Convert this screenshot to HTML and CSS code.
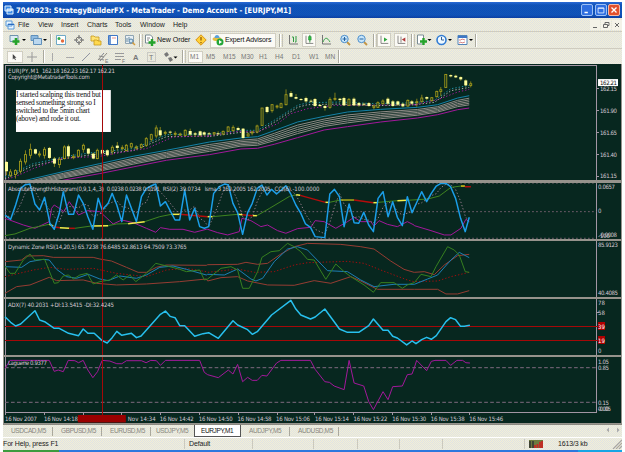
FILE: index.html
```html
<!DOCTYPE html>
<html lang="en">
<head>
<meta charset="utf-8">
<title>MetaTrader</title>
<link rel="stylesheet" href="styles.css">
</head>
<body>
<div class="window">
  <header class="titlebar">
    <svg class="app-icon" viewBox="0 0 10 10"><path d="M1 1h6v5H1zM3 4h6v5H3z" fill="#3d8be8" stroke="#e4f4ff"/><path d="M3 5h6" stroke="#fff"/></svg>
    <svg class="title-text" viewBox="0 0 280 14"><text x="0" y="10.3" textLength="275" lengthAdjust="spacingAndGlyphs">7040923: StrategyBuilderFX - MetaTrader - Demo Account - [EURJPY,M1]</text></svg>
    <div class="win-buttons">
      <svg viewBox="0 0 12 12"><path d="M3 9h4" stroke="#fff" stroke-width="1.6"/></svg>
      <svg viewBox="0 0 12 12"><path d="M2.5 3.5h7v6h-7zM2.5 4h7" fill="none" stroke="#e8f2ff"/></svg>
      <svg class="close" viewBox="0 0 12 12"><path d="M3 3l6 6M9 3l-6 6" stroke="#fff" stroke-width="1.6"/></svg>
    </div>
  </header>

  <nav class="menubar chrome">
    <svg class="app-icon" viewBox="0 0 10 10"><path d="M1 1h6v5H1zM3 4h6v5H3z" fill="#eaf5ff" stroke="#5b9ad8"/><path d="M3 4.5h6" stroke="#2b6bc0"/></svg>
    <span>File</span><span>View</span><span>Insert</span><span>Charts</span><span>Tools</span><span>Window</span><span>Help</span>
    <svg class="mdi" viewBox="0 0 32 10"><rect width="10" height="10" fill="#f4f2e8"/><rect x="11" width="10" height="10" fill="#f4f2e8"/><rect x="22" width="10" height="10" fill="#f4f2e8"/><path d="M3 7.5h4M13.500 4.500h4v3h-4zM15 4V2.500h4v3h-1M25 3l4 4M29 3l-4 4" fill="none" stroke="#666"/></svg>
  </nav>

  <div class="toolbar chrome main-tools">
    <svg viewBox="0 0 20 12"><path d="M1 1.500h8v6H1z" fill="#dcecf5" stroke="#6f93ad"/><path d="M7 4v7M3.500 7.500h7" stroke="#25a32b" stroke-width="2.600"/><path d="M13 5h4l-2 2z"/></svg>
    <svg viewBox="0 0 20 12"><path d="M1 1.500h7v5H1z" fill="#8fbbe2" stroke="#6090bb"/><path d="M3.500 4.500h8v6h-8z" fill="#bcd8ef" stroke="#6090bb"/><path d="M13 5h4l-2 2z"/></svg>
    <i class="sep"></i>
    <svg viewBox="0 0 12 12"><path d="M1.500 1.500h9v9h-9z" fill="#fff" stroke="#6fa9c7"/><circle cx="4" cy="4.500" r="1.500" fill="#32a84b"/><circle cx="7.500" cy="7" r="1.700" fill="#e46b3d"/></svg>
    <svg viewBox="0 0 12 12"><circle cx="6" cy="6" r="3" fill="none" stroke="#777"/><path d="M6 1v4M6 7v4M1 6h4M7 6h4" stroke="#666"/></svg>
    <svg viewBox="0 0 12 12"><path d="M1 2h3l1 1h4v4H1z" fill="#ffe372" stroke="#c79b1c" stroke-width=".8"/><path d="M4 6h3l1 1h3v4H4z" fill="#ffd94e" stroke="#c79b1c" stroke-width=".8"/></svg>
    <svg viewBox="0 0 12 12"><path d="M1.500 1.500h9v9h-9z" fill="#fff" stroke="#3f77c6"/><path d="M3 1v10" stroke="#3f77c6" stroke-width="1.500"/><path d="M5 4h4" stroke="#e49393"/></svg>
    <svg viewBox="0 0 12 12"><path d="M1.500 1.500h8v8h-8z" fill="#e7eff4" stroke="#90a5b2"/><path d="M3 8V4M5 6V3" stroke="#6b8ca1"/><circle cx="7" cy="7" r="2" fill="#cde5f5" stroke="#5680a3"/><path d="M8.500 8.500l2.500 2.500" stroke="#d29b3c" stroke-width="1.500"/></svg>
    <i class="sep grip"></i>
    <div class="labelled"><svg viewBox="0 0 12 12"><path d="M1.500 1h5l2 2v6h-7z" fill="#fff" stroke="#7b8c93"/><path d="M3 4h3M3 6h2" stroke="#888"/><path d="M8 5v7M4.500 8.500h7" stroke="#25a32b" stroke-width="2.400"/></svg><span>New Order</span></div>
    <svg viewBox="0 0 12 12"><path d="M6 .8L11.200 6 6 11.200.8 6z" fill="#ffd13b" stroke="#d99416"/><path d="M6 3v3.500M6 8v1.200" stroke="#8a5200" stroke-width="1.200"/></svg>
    <div class="labelled pressed experts"><svg viewBox="0 0 12 12"><ellipse cx="5" cy="5" rx="4.500" ry="2" fill="#e6bd43"/><path d="M2.500 4c0-4 5-4 5 0z" fill="#5ba1d9"/><circle cx="8" cy="8" r="3.500" fill="#22a537"/><path d="M7 6l3 2-3 2z" fill="#fff"/></svg><span>Expert Advisors</span></div>
    <i class="sep grip"></i>
    <svg viewBox="0 0 12 12"><path d="M2.500 1v9H11" fill="none" stroke="#777"/><path d="M5 3h1.500v5M9 2v6h-1" fill="none" stroke="#2c9a40"/></svg>
    <svg class="pressed" viewBox="0 0 14 14"><path d="M3.500 2v9H12" fill="none" stroke="#777"/><path d="M8 1v9" stroke="#187e27"/><path d="M6.500 3h3v4h-3z" fill="#2fc145" stroke="#187e27" stroke-width=".6"/></svg>
    <svg viewBox="0 0 12 12"><path d="M2.500 1v9H11" fill="none" stroke="#777"/><path d="M3 8C5 3 7 3 10 8" fill="none" stroke="#39a549"/></svg>
    <svg viewBox="0 0 12 12"><path d="M8 8l3 3" stroke="#c39443" stroke-width="1.800"/><circle cx="5.500" cy="5" r="3.700" fill="#c8e6fb" stroke="#4d8ec9"/><path d="M3.500 5h4M5.500 3v4" stroke="#24629e"/></svg>
    <svg viewBox="0 0 12 12"><path d="M8 8l3 3" stroke="#c39443" stroke-width="1.800"/><circle cx="5.500" cy="5" r="3.700" fill="#c8e6fb" stroke="#4d8ec9"/><path d="M3.500 5h4" stroke="#24629e"/></svg>
    <i class="sep grip"></i>
    <svg class="pressed" viewBox="0 0 14 14"><path d="M3.500 2v9H12" fill="none" stroke="#777"/><path d="M7 4l4 2.500L7 9z" fill="#2da63c"/></svg>
    <svg class="pressed" viewBox="0 0 14 14"><path d="M3.500 2v9H12M7 3v7" fill="none" stroke="#777"/><path d="M12 4v5L8 6.500z" fill="#b03838"/></svg>
    <i class="sep grip"></i>
    <svg viewBox="0 0 20 12"><path d="M1.500 1h6v9h-6z" fill="#fff" stroke="#7b8c93"/><path d="M7.500 4v7M4 7.500h7" stroke="#25a32b" stroke-width="2.400"/><path d="M11.500 5h4l-2 2z"/></svg>
    <svg viewBox="0 0 20 12"><circle cx="5.500" cy="6" r="4.500" fill="#eef8ff" stroke="#317cd3" stroke-width="1.600"/><path d="M5.500 3v3H8" fill="none" stroke="#2f5f96"/><path d="M12 5h4l-2 2z"/></svg>
    <svg viewBox="0 0 18 12"><path d="M1 1.500h9v9H1z" fill="#fff" stroke="#5284b9"/><path d="M1 3h9" stroke="#3f77c6" stroke-width="2"/><path d="M2 6l2 0 1-1 3 1M2 9l2-1 1 1 3-1" stroke="#c66" fill="none" stroke-width=".8"/><path d="M12 5h4l-2 2z"/></svg>
    <i class="sep"></i>
  </div>

  <div class="toolbar chrome line-tools">
    <svg class="pressed" viewBox="0 0 16 14"><path d="M6 2v9l2-2 2 3 1-1-2-3h3z" fill="#444"/></svg>
    <svg viewBox="0 0 12 12"><path d="M6 1v10M1 6h10" stroke="#999"/></svg>
    <i class="sep"></i>
    <svg viewBox="0 0 12 12"><path d="M5.500 2v8" stroke="#aaa"/></svg>
    <svg viewBox="0 0 12 12"><path d="M2 6.500h8" stroke="#aaa"/></svg>
    <svg viewBox="0 0 12 12"><path d="M2 10l8-8" stroke="#999"/></svg>
    <svg viewBox="0 0 12 12"><path d="M1 9l6-7M3 10l7-8M2 5l5 1M2 8l5 1" stroke="#888"/><text x="8" y="11.500" font-size="5">E</text></svg>
    <svg viewBox="0 0 12 12"><path d="M1 2.500h9M1 5.500h9M1 8.500h6" stroke="#999"/><text x="8" y="12" font-size="5">F</text></svg>
    <svg viewBox="0 0 12 12"><text x="3" y="9" font-size="7.500" font-weight="bold">A</text></svg>
    <svg viewBox="0 0 12 12"><path d="M1.500 1.500h8v9h-8z" fill="none" stroke="#aaa" stroke-dasharray="1"/><text x="3" y="9" font-size="7">T</text></svg>
    <svg viewBox="0 0 16 12"><path d="M1 3l3-2 2 3-3 2zM5 7l3-1 2 3-3 2zM3 5l5 3" fill="#777"/><path d="M10.500 5.500h4l-2 2z"/></svg>
    <i class="sep grip"></i>
    <span class="pressed">M1</span><span>M5</span><span>M15</span><span>M30</span><span>H1</span><span>H4</span><span>D1</span><span>W1</span><span>MN</span>
    <i class="sep"></i>
  </div>

  <main class="charts">
    <svg class="pane price" viewBox="3 64 619 116">
      <path class="axis" d="M5.500 180V65.500H597.500V180"/>
      <g id="price" transform="translate(0 62) scale(.33333)"></g>
      <rect x="16" y="90" width="95" height="42" fill="#fff"/>
      <g class="note">
        <text x="16" y="97" textLength="85">I started scalping this trend but</text>
        <text x="16" y="105" textLength="80">sensed something strong so I</text>
        <text x="16" y="113" textLength="74">switched to the 5min chart</text>
        <text x="16" y="121" textLength="65">(above) and rode it out.</text>
      </g>
      <path class="cross" d="M102.500 65V180"/>
      <text x="8" y="73" textLength="31">EURJPY,M1</text><text x="42" y="73" textLength="73">162.18 162.23 162.17 162.21</text>
      <text x="8" y="79.300" textLength="82">Copyright@MetatraderTools.com</text>
      <path class="axis" d="M597 88.500h3M597 110.500h3M597 132.500h3M597 154.500h3M597 176.500h3"/>
      <text x="601" y="91.300" textLength="17">162.15</text><text x="601" y="112.800" textLength="17">161.90</text><text x="601" y="134.800" textLength="17">161.65</text><text x="601" y="156.600" textLength="17">161.40</text><text x="601" y="178.300" textLength="17">161.15</text>
      <rect x="599" y="79" width="20" height="7" fill="#fff"/><text class="dark" x="601" y="85.200" textLength="17">162.21</text>
    </svg>

    <svg class="pane" viewBox="3 183 619 56">
      <path class="axis" d="M5.500 183V239M597.500 183V239"/>
      <g id="strength" transform="translate(0 180) scale(.33333)">
        <path class="level" d="M15 9H1792M15 95H1792M15 175H1792"/>
      </g>
      <path class="cross" d="M102.500 183V239"/>
      <text x="8" y="190.700" textLength="96">AbsoluteStrengthHistogram(0,9,1,4,,3)</text><text x="107" y="190.700" textLength="53">0.0238 0.0238 0.0191</text><text x="163" y="190.700" textLength="38">RSI(2) 39.0734</text><text x="205" y="190.700" textLength="66">lsma 3 162.2005 162.2005</text><text x="275" y="190.700" textLength="45">CCI(6) -100.0000</text>
      <text x="599" y="188.700" textLength="17">0.0657</text><text x="599" y="213.500">0</text><text x="600" y="237.500" textLength="18">-0.0008</text><text x="599" y="238.500" textLength="12">-100</text>
    </svg>

    <svg class="pane" viewBox="3 241 619 56">
      <path class="axis" d="M5.500 241V297M597.500 241V297"/>
      <g id="zones" transform="translate(0 180) scale(.33333)"></g>
      <path class="cross" d="M102.500 241V297"/>
      <text x="8" y="248.700" textLength="179">Dynamic Zone RSI(14,20,5) 65.7238 76.6485 52.8613 64.7509 73.3765</text>
      <text x="599" y="247" textLength="20">85.9123</text><text x="599" y="295.500" textLength="20">40.4085</text>
    </svg>

    <svg class="pane" viewBox="3 299 619 56">
      <path class="axis" d="M5.500 299V355M597.500 299V355M597 312.500h3"/>
      <path class="cross" d="M5 326.500H600M5 340.500H600"/>
      <g id="adx" transform="translate(0 295) scale(.33333)"></g>
      <path class="cross" d="M102.500 299V355"/>
      <text x="8" y="307.200" textLength="106">ADX(7) 40.2031 +DI:13.5415 -DI:32.4245</text>
      <rect x="599" y="322" width="7" height="8" fill="#b00000"/><rect x="599" y="336" width="7" height="8" fill="#b00000"/>
      <text x="599" y="305">78</text><text x="599" y="315">58</text><text class="lit" x="599" y="328.700">39</text><text class="lit" x="599" y="342.800">19</text><text x="599" y="353.500">0</text>
    </svg>

    <svg class="pane last" viewBox="3 357 619 66">
      <path class="axis" d="M5.500 357V413M597.500 357V413M5 412.500H598"/>
      <path class="axis" d="M5.500 413v2M44.500 413v2M83.500 413v2M121.500 413v2M160.500 413v2M199.500 413v2M238.500 413v2M277.500 413v2M315.500 413v2M354.500 413v2M393.500 413v2M432.500 413v2M470.500 413v2"/>
      <g id="laguerre" transform="translate(0 295) scale(.33333)">
        <path class="level wide" d="M15 218H1792M15 322H1792"/>
      </g>
      <path class="cross" d="M102.500 357V415"/>
      <text x="8" y="365.300" textLength="39">Laguerre 0.9377</text>
      <text x="599" y="363.500" textLength="11">1.05</text><text x="599" y="369.500" textLength="11">0.85</text><text x="599" y="404.800" textLength="11">0.15</text><text x="599" y="411" textLength="13">-0.05</text><text x="599" y="411.500" textLength="11">0.00</text>
      <g id="times"></g>
      <rect x="78" y="415" width="48" height="7.500" fill="#990000"/>
    </svg>
  </main>

  <div class="tabs chrome">
    <span>USDCAD,M5</span><span>GBPUSD,M5</span><span>EURUSD,M5</span><span class="no-sep">USDJPY,M5</span><span class="active">EURJPY,M1</span><span>AUDJPY,M5</span><span>AUDUSD,M5</span>
    <svg class="scroll" viewBox="0 0 16 8"><path d="M4 1.500v5L1.500 4zM12 1.500v5L14.500 4z" fill="#aaa"/></svg>
  </div>

  <footer class="status chrome">
    <span>For Help, press F1</span><span>Default</span><span></span><span></span><span></span><span></span><span></span>
    <span class="traffic"><svg viewBox="0 0 14 8"><path d="M0 8V0h14v8z" fill="#6d7a3d"/><path d="M1 8V1M4 8V1" stroke="#333" stroke-width="1.500"/><path d="M6 8V5M8.500 8V4M11 8V2M13 8V1" stroke="#cd2323" stroke-width="1.700"/></svg>1613/3 kb</span>
    <svg class="resize" viewBox="0 0 10 10"><path d="M1 10l9-9M4 10l6-6M7 10l3-3" stroke="#aaa6a0" stroke-width="1.200"/></svg>
  </footer>
  <div class="taskbar"></div>
</div>
<script src="script.js"></script>
</body>
</html>
```
FILE: styles.css
```css
* { box-sizing: border-box; }
body { margin: 0; background: #fff; overflow: hidden; }
svg { display: block; flex: none; }
.window {
  width: 619px; height: 450px; margin: 2px 0 0 3px;
  display: flex; flex-direction: column;
  font: 7px/10px "Liberation Sans", sans-serif; color: #222;
}
.chrome { background: repeating-conic-gradient(#dfe3e4 0 25%, #f3efd6 0 50%) 0 0 / 2px 2px; }

.titlebar {
  height: 16px; flex: none; display: flex; align-items: center; padding: 0 0 0 1px;
  background: linear-gradient(#2a6ad6 0, rgba(16, 78, 188, .75) 3px, rgba(16, 78, 188, .75) 13px, #0c3fa3 16px),
    repeating-conic-gradient(#0b43b8 0 25%, #137a9c 0 50%) 0 0 / 2px 2px;
}
.app-icon { width: 10px; height: 10px; }
.title-text { width: 280px; height: 14px; margin-left: 2px; }
.title-text text { font: bold 7.6px "DejaVu Sans Condensed", "DejaVu Sans", sans-serif; fill: #fff; }
.win-buttons { margin-left: auto; display: flex; gap: 1.500px; padding-right: 2px; }
.win-buttons svg { width: 12px; height: 12px; background: #2e6ee0; border: 1px solid #9dc0f5; border-radius: 2px; }
.win-buttons .close { background: #e2502c; border-color: #f5b9a5; }

.menubar {
  height: 13px; flex: none; display: grid; align-items: center; padding-left: 2px;
  grid-template-columns: 13px 20px 23px 26px 28px 25px 33px 1fr 32px;
}
.menubar .mdi { width: 32px; height: 10px; }

.toolbar { flex: none; display: grid; align-items: center; justify-items: start; padding-left: 6px; border-top: 1px solid #cfccc0; }
.toolbar svg { width: 12px; height: 12px; }
.toolbar svg[viewBox^="0 0 20"] { width: 20px; }
.toolbar svg[viewBox^="0 0 18"] { width: 18px; }
.toolbar svg[viewBox^="0 0 16"] { width: 16px; }
.toolbar svg[viewBox^="0 0 14"] { width: 14px; height: 14px; }
.toolbar text { font-family: "Liberation Sans", sans-serif; fill: #777; }
.main-tools {
  height: 17px;
  grid-template-columns: 21px 20px 5px 18px 17px 17px 17px 15px 5px 51px 15px 69px 8px 15px 18px 19px 17px 17px 4px 17px 17px 5px 20px 21px 18px 3px;
}
.line-tools {
  height: 16px; padding-left: 4px;
  grid-template-columns: 19px 17px 4px 17px 16px 17px 17px 16px 16px 17px 19px 6px 16px 17px 18px 18px 16px 17px 17px 16px 15px 3px;
}
.line-tools span { color: #777; font-size: 6.500px; padding: 1px 2px; }
.sep { width: 1px; height: 13px; background: #aaa99d; box-shadow: 1px 0 #fff; }
.grip { border-left: 0; box-shadow: 1px 0 #fff, 3px 0 #c4c2b6; }
.labelled { display: flex; align-items: center; gap: 1px; white-space: nowrap; color: #111; letter-spacing: -.05px; }
.pressed { background: #fbfaf5; border: 1px solid #d0cec2; }
.line-tools .pressed { padding: 0 3px 0 1px; }
.labelled.pressed { width: 66px; height: 15px; padding-left: 1px; letter-spacing: -.15px; }

.charts { flex: none; height: 360px; display: flex; flex-direction: column; background: #96938c; }
.pane { width: 619px; background: #07271f; border-right: 1px solid #96938c; box-shadow: inset 1px 0 #99958c; margin-top: 2px; height: 56px; }
.price { height: 116px; margin: 0 0 1px; }
.charts .last { height: 66px; }
.pane text { font: 6px "DejaVu Sans Condensed", "DejaVu Sans", sans-serif; fill: #d3c9d3; }
.note text { font: 7.500px "Liberation Serif", serif; fill: #111; }
.pane .dark { fill: #111; }
.pane .lit { fill: #fff; }
.axis { fill: none; stroke: #a296a4; shape-rendering: crispEdges; }
.cross { fill: none; stroke: #a50808; shape-rendering: crispEdges; }
.level { fill: none; stroke: #76606f; stroke-width: 3; stroke-dasharray: 5 7; }
.wide { stroke: #806a80; stroke-dasharray: 11 7; }
.line { fill: none; stroke-width: 3; stroke-linejoin: round; }
.thick { stroke-width: 4.500; }
.dots { stroke-dasharray: 4 6; }

.tabs { flex: none; height: 13px; display: flex; align-items: flex-start; border-top: 1px solid #8c8a82; }
.tabs span { height: 9px; margin-top: 2px; width: 49px; padding-left: 8px; line-height: 7px; font-size: 6.500px; letter-spacing: -.38px; color: #88867d; border-right: 1px solid #aaa89d; }
.tabs span:first-child { width: 50px; }
.tabs .no-sep { width: 43px; padding-left: 5px; border: 0; }
.tabs .active { width: 47px; height: 12px; margin: 0; padding: 2px 0 0 6px; background: #fff; color: #111; border: 1px solid #555; border-top: 0; }
.tabs .scroll { width: 16px; height: 8px; margin: 1px 1px 0 auto; }

.status {
  flex: none; height: 13px; display: grid; align-items: center; border-top: 1px solid #fff;
  grid-template-columns: 182px 68px 61px 44px 42px 43px 82px 86px 1fr; white-space: nowrap;
}
.status > span { height: 10px; line-height: 10px; border-right: 1px solid #cbc9bd; letter-spacing: -.15px; }
.status > span + span { padding-left: 4px; }
.status .traffic { display: flex; align-items: center; gap: 15px; border: 0; }
.traffic svg { width: 14px; height: 8px; }
.resize { width: 10px; height: 10px; justify-self: end; }
.taskbar { flex: none; height: 2px; background: linear-gradient(90deg, #3c9b3e 56px, #2c78de 56px 575px, #18a5e4 575px); }
```
FILE: script.js
```js
const NS = 'http://www.w3.org/2000/svg';
function add(id, tag, attrs, text) {
  const el = document.createElementNS(NS, tag);
  for (const k in attrs) el.setAttribute(k, attrs[k]);
  if (text) el.textContent = text;
  document.getElementById(id).appendChild(el);
}
// Each series comes in three chunks, one per third of the plot width.
const OFFSETS = [0, 624, 1245];
function join(chunks) {
  return chunks.flatMap((c, i) => c.trim().split(' ').map(p => {
    const [x, y] = p.split(',').map(Number);
    return [x + OFFSETS[i], y];
  }));
}
function line(id, pts, stroke, cls = '') {
  add(id, 'polyline', { points: pts.map(p => p.join()).join(' '), stroke, class: 'line ' + cls });
}

// Moving-average ribbon: x, upper edge, lower edge
const ribbon = [[70,357,382],[190,329,355],[300,305,335],[400,283,315],[500,265,295],[630,240,278],[724,228,261],[774,224,259],[824,206,247],[894,180,227],[974,163,204],[1044,150,194],[1144,142,180],[1254,136,168],[1315,128,158],[1375,108,143],[1410,101,138]];
const band = f => ribbon.map(([x, a, b]) => [x, a + (b - a) * f]);
line('price', band(0), '#1582a8');
[.2, .34, .48, .61, .74].forEach(f => line('price', band(f), '#8e8b86', ''));
line('price', band(1), '#a3189b');
const fast = join(['15,345 100,305 150,295 200,283 270,273 400,260 450,240 500,218 630,216', '0,218 100,205 150,205 200,175 270,130 300,122 400,120 500,125 630,122', '0,122 60,115 110,80 165,70']);
const slow = join(['15,355 60,338 100,320 180,290 300,283 400,265 440,260 520,225 630,222', '0,222 90,208 150,210 210,185 250,155 300,140 380,130 630,128', '0,128 70,113 130,90 165,82']);
line('price', fast, '#2296ad', 'dots');
line('price', fast.map((p, i) => [p[0], (p[1] * 1 + slow[Math.min(i, slow.length - 1)][1] * 0) + 6]), '#b9b5b5', 'dots');
line('price', slow, '#a3189b', 'dots');

// Candles: x, body top, body bottom, high, low, filled
const candles = [
  [[18,300,328,298,340,1],[32,330,340,322,346,0],[47,326,338,322,350,0],[61,298,328,290,335,0],[76,278,300,265,308,0],[90,262,280,245,290,0],[105,262,275,260,278,1],[119,276,279,268,286,0],[134,262,280,255,290,0],[148,258,288,255,292,1],[163,290,305,285,315,1],[178,292,308,285,318,0],[192,255,290,250,292,0],[206,253,283,248,290,1],[221,284,287,276,292,0],[236,265,283,262,286,0],[250,250,262,245,272,0],[264,260,275,258,278,1],[279,275,290,272,292,1],[293,265,290,260,292,0],[307,264,274,260,278,1],[322,265,280,262,284,1],[337,256,268,250,278,0],[351,251,258,240,266,1],[366,257,260,250,266,0],[380,250,266,246,268,0],[395,245,255,242,260,0],[410,255,258,250,264,0],[424,248,256,244,260,0],[439,230,250,225,255,0],[453,218,232,215,240,0],[468,198,222,190,228,0],[482,205,220,195,226,1],[497,211,214,206,220,0],[511,209,212,206,220,1],[526,214,217,208,224,0],[540,216,219,212,222,0],[555,205,220,202,222,0],[570,207,218,200,222,1],[585,214,218,210,224,1],[600,208,220,206,224,1],[614,211,218,208,222,1]],
  [[5,214,217,210,220,1],[18,212,216,210,220,0],[32,214,217,208,220,1],[47,208,216,206,220,0],[62,195,208,192,210,0],[76,196,206,190,210,0],[90,198,204,194,206,1],[105,200,228,198,230,1],[120,216,222,212,224,0],[134,210,213,206,220,0],[149,192,210,188,214,0],[163,138,190,138,192,0],[178,135,150,132,154,1],[192,128,146,126,152,0],[207,132,135,128,140,0],[221,125,137,122,138,0],[235,98,128,82,130,0],[250,93,104,87,106,1],[265,105,110,96,112,1],[280,111,114,108,116,1],[294,108,118,104,122,1],[309,116,119,112,122,1],[323,111,132,108,134,1],[338,129,132,126,134,1],[352,132,138,128,146,1],[367,112,136,106,140,0],[381,109,112,92,116,0],[396,110,114,108,120,1],[410,108,130,104,132,1],[425,112,130,108,132,0],[440,110,130,106,132,1],[454,123,130,120,134,1],[469,125,128,122,132,1],[484,123,132,120,134,1],[498,132,136,128,142,0],[512,122,136,118,138,0],[527,117,125,112,128,0],[542,110,125,106,128,1],[556,118,132,114,134,1],[570,118,128,116,132,1],[585,125,133,122,136,1],[600,115,132,112,134,0],[614,118,125,114,128,1]],
  [[7,119,122,110,134,0],[22,108,118,98,122,0],[37,105,110,103,114,1],[51,107,116,105,118,0],[66,88,104,86,106,0],[80,83,88,75,102,0],[95,37,76,36,78,0],[109,39,43,37,46,1],[124,41,46,38,48,1],[139,45,52,43,56,1],[153,55,70,52,72,1],[168,65,70,58,76,0]]
];
candles.forEach((chunk, i) => chunk.forEach(([x, t, b, h, l, filled]) => {
  const cx = Math.floor((x + OFFSETS[i]) / 3) * 3 + 1.5;
  add('price', 'path', { d: `M${cx} ${h}V${l}`, stroke: '#9a9018', 'stroke-width': 2.5 });
  add('price', 'rect', filled
    ? { x: cx - 4.5, y: t, width: 9, height: b - t, fill: '#ffff9c' }
    : { x: cx - 3, y: t, width: 6, height: b - t, fill: '#07271f', stroke: '#a79d1b', 'stroke-width': 2.6 });
}));

// Strength histogram pane
line('strength', join(['15,115 70,135 105,145 148,125 155,85 163,75 178,85 192,95 208,65 236,105 264,92 300,95 340,132 366,120 400,128 440,145 468,157 482,143 510,148 550,148 585,157 620,148', '0,148 30,158 60,165 95,155 103,115 130,122 160,140 180,135 210,152 235,160 270,146 310,142 323,122 350,125 385,145 420,125 440,112 460,125 490,125 500,138 515,122 540,133 570,140 600,125 620,135', '0,137 50,152 90,165 110,165 140,145 155,118 165,125']), '#a3189b');
const osc = join(['15,105 32,118 47,75 62,25 76,14 90,12 105,72 119,90 134,52 150,130 163,148 178,100 190,35 206,103 221,103 236,45 250,70 264,110 279,148 295,55 307,90 325,70 337,40 351,75 366,125 380,45 410,125 425,50 440,25 453,18 468,12 482,78 497,65 526,120 540,120 555,30 570,120 585,85 600,140 614,145', '3,140 18,40 35,20 50,12 62,14 76,70 90,98 105,163 120,98 134,70 149,25 163,15 178,45 192,28 207,42 221,30 235,17 250,42 265,75 280,100 294,132 309,142 323,170 352,173 367,42 381,28 396,50 410,140 425,72 440,128 454,130 469,97 484,135 498,155 512,55 527,35 542,110 556,65 570,112 585,137 600,50 614,98', '5,72 22,35 37,65 51,40 66,18 80,10 95,10 109,20 124,55 139,115 153,155 165,112']);
const smooth = osc.map((p, i) => {
  const w = osc.slice(Math.max(0, i - 2), i + 1);
  return [p[0], w.reduce((s, q) => s + q[1], 0) / w.length];
});
line('strength', smooth, '#8f7889', 'dots');
const trend = [
  ['#3f8420', '15,167 45,162 90,145 148,133'], ['#f4ee4a', '148,133 160,138'], ['#b50c0c', '160,140 180,143'], ['#f4ee4a', '180,143 208,145'], ['#b50c0c', '208,145 225,145'], ['#3f8420', '225,145 275,138'], ['#f4ee4a', '275,138 325,137'], ['#3f8420', '325,137 350,132 385,131'], ['#f4ee4a', '385,131 435,125'], ['#3f8420', '435,125 480,110 515,103'], ['#f4ee4a', '515,103 540,103'], ['#b50c0c', '540,103 624,110'],
  ['#f4ee4a', '624,110 639,110'], ['#3f8420', '639,110 714,103'], ['#f4ee4a', '714,103 729,104'], ['#b50c0c', '729,104 760,107'], ['#f4ee4a', '760,107 772,107'], ['#3f8420', '772,107 810,85 870,49 890,44'], ['#f4ee4a', '890,44 902,46'], ['#b50c0c', '902,46 978,67'], ['#f4ee4a', '978,67 990,67'], ['#3f8420', '990,67 1022,60'], ['#aaa516', '1022,60 1064,60'], ['#b50c0c', '1064,60 1122,68'], ['#f4ee4a', '1122,68 1136,68'], ['#3f8420', '1136,67 1194,62'], ['#f4ee4a', '1194,62 1222,61'], ['#3f8420', '1222,61 1285,57 1320,48 1355,22 1385,18'], ['#e0c818', '1385,18 1397,18'], ['#b50c0c', '1397,20 1415,20']
];
trend.forEach(([c, p]) => add('strength', 'polyline', { points: p, stroke: c, class: 'line' + (c === '#3f8420' ? '' : ' thick') }));
line('strength', osc, '#1b9ee8', 'thick');

// Dynamic zone pane
line('zones', join(['15,245 65,240 80,228 130,227 160,232 280,232 300,237 335,243 380,262 415,277 440,277 470,262 500,255 620,256', '0,254 90,253 115,247 150,253 180,250 220,222 260,200 300,190 400,193 460,200 500,207 550,243 590,268 620,277', '0,277 30,275 60,284 90,255 130,227 165,223']), '#963c32');
line('zones', join(['15,290 100,270 150,262 200,268 280,265 350,280 440,290 500,270 560,265 620,275', '0,277 90,267 140,277 200,275 260,255 300,248 420,244 470,250 520,270 600,300 620,305', '0,305 70,303 110,290 165,277']), '#a30d0d', 'dots');
line('zones', join(['15,340 50,320 90,315 148,292 170,302 250,300 290,310 350,315 440,312 540,305 620,297', '0,303 40,293 90,290 120,303 180,315 260,316 320,302 370,310 430,290 460,303 510,328 620,328', '0,328 70,328 95,342 130,342 165,332']), '#963c32');
line('zones', join(['15,260 65,262 90,245 130,238 148,240 170,268 200,290 230,295 265,283 300,297 325,302 360,288 410,295 440,285 480,262 520,258 560,268 620,285', '0,283 50,285 90,267 130,297 145,303 165,295 200,245 240,207 270,200 300,210 360,272 420,275 460,300 500,320 560,313 620,313', '0,313 40,297 70,285 110,240 135,217 165,233']), '#1d7eb4');
line('zones', join(['15,258 30,280 45,280 70,240 90,222 105,240 134,238 163,310 175,308 190,288 205,285 221,297 240,285 262,280 280,312 300,305 330,300 350,285 370,300 390,285 408,305 440,280 468,250 510,260 540,268 560,275 600,270 614,300', '0,297 40,265 70,260 90,270 105,325 125,325 150,275 163,232 190,215 215,212 240,190 260,200 280,215 300,238 320,240 355,298 385,252 410,275 430,290 470,315 498,337 520,308 560,308 585,325 600,315 620,308', '0,308 20,283 50,290 65,260 100,200 120,210 135,225 153,275 165,277']), '#36801f');

// ADX pane
line('adx', join(['15,65 32,82 47,93 62,87 105,47 119,75 134,80 163,100 178,100 206,115 236,122 250,102 264,115 283,115 307,137 322,144 337,128 351,109 366,121 395,115 410,128 424,123 482,58 497,48 511,64 526,68 540,92 555,92 585,124 610,116', '3,113 32,130 76,77 90,90 120,104 134,118 149,110 192,60 250,16 265,42 280,60 309,72 323,66 352,42 396,102 420,112 454,112 484,92 498,72 527,106 542,106 556,124 570,129 598,150 614,138', '5,146 22,134 37,127 51,133 66,122 95,80 109,68 124,74 139,94 150,94 167,91']), '#28c0ee', 'thick');

// Laguerre pane
line('laguerre', join(['15,220 30,196 148,196 163,229 175,225 190,230 205,196 225,197 236,203 250,196 264,225 279,248 293,230 307,196 330,198 351,206 366,206 380,197 425,197 439,203 453,196 470,197 482,211 497,196 600,196 614,232', '0,239 32,248 62,225 76,237 90,208 105,260 120,247 134,256 149,256 163,241 178,243 207,204 220,196 309,196 323,223 352,260 366,262 380,273 410,284 425,196 440,264 469,273 484,320 498,344 527,290 542,314 556,275 585,273 600,239 614,237', '0,218 7,196 37,227 51,199 62,196 95,196 109,211 128,196 145,196 155,203 167,204']), '#a3189b');

[[5, 32, '16 Nov 2007'], [44, 34, '16 Nov 14:18'], [128, 28, 'Nov 14:34'], [160, 34, '16 Nov 14:42'], [199, 34, '16 Nov 14:50'], [238, 34, '16 Nov 14:58'], [276.5, 34, '16 Nov 15:06'], [315.5, 34, '16 Nov 15:14'], [354, 34, '16 Nov 15:22'], [393, 34, '16 Nov 15:30'], [431.5, 34, '16 Nov 15:38'], [470, 34, '16 Nov 15:46']]
  .forEach(([x, w, label]) => add('times', 'text', { x, y: 420.7, textLength: w }, label));
```
